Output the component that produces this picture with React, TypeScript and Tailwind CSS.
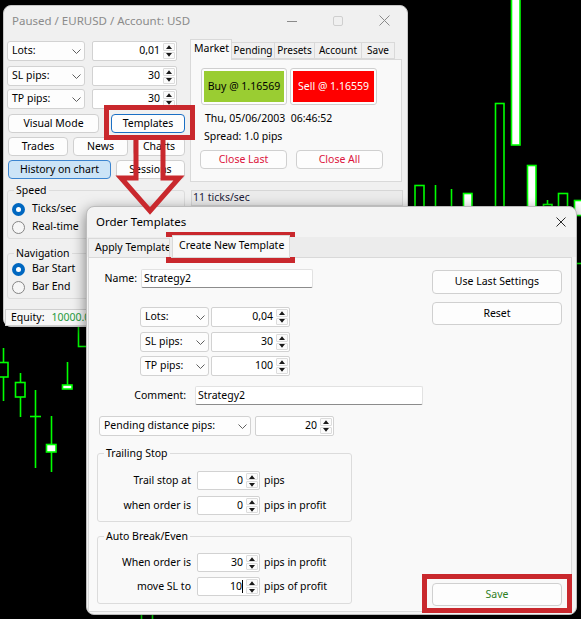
import type { ReactNode } from 'react'

const G = '#00ff00'

function Chevron() {
  return (
    <svg width="9" height="5" viewBox="0 0 9 5" className="shrink-0">
      <path d="M0.5 0.5 L4.5 4.5 L8.5 0.5" fill="none" stroke="#5f5f5f" strokeWidth="1" />
    </svg>
  )
}

function Combo({ label, className }: { label: string; className: string }) {
  return (
    <div className={`h-[20px] flex items-center justify-between pl-[4px] pr-[3px] bg-[#fdfdfd] border border-[#d2d2d2] rounded-[3px] ${className}`}>
      <span className="whitespace-nowrap">{label}</span>
      <Chevron />
    </div>
  )
}

function SpinArrows() {
  return (
    <div className="w-[12px] flex flex-col gap-[1px] py-[1px] mr-[1px]">
      <div className="flex-1 flex items-center justify-center bg-[#fbfbfb] border border-[#dcdcdc] rounded-[1px]">
        <svg width="6" height="4" viewBox="0 0 6 4">
          <path d="M0 4 L3 0.3 L6 4 Z" fill="#1a1a1a" />
        </svg>
      </div>
      <div className="flex-1 flex items-center justify-center bg-[#fbfbfb] border border-[#dcdcdc] rounded-[1px]">
        <svg width="6" height="4" viewBox="0 0 6 4">
          <path d="M0 0 L3 3.7 L6 0 Z" fill="#1a1a1a" />
        </svg>
      </div>
    </div>
  )
}

function Spin({ value, className, caret }: { value: string; className: string; caret?: boolean }) {
  return (
    <div className={`flex bg-white border border-[#d2d2d2] rounded-[2px] ${className}`}>
      <div className="flex-1 flex items-center justify-end pr-[3px]">
        <span>{value}</span>
        {caret && <span className="w-px h-[13px] bg-black" />}
      </div>
      <SpinArrows />
    </div>
  )
}

function Btn({ children, className }: { children: ReactNode; className: string }) {
  return (
    <div className={`flex items-center justify-center whitespace-nowrap border rounded-[4px] ${className}`}>
      {children}
    </div>
  )
}

function Radio({ label, on }: { label: string; on?: boolean }) {
  return (
    <div className="h-[18px] flex items-center gap-[7px] pl-[4px]">
      {on ? (
        <span className="w-[13px] h-[13px] rounded-full bg-[#0067c0] flex items-center justify-center">
          <span className="w-[5px] h-[5px] rounded-full bg-white" />
        </span>
      ) : (
        <span className="w-[13px] h-[13px] rounded-full border border-[#858585] bg-[#f6f6f6]" />
      )}
      <span>{label}</span>
    </div>
  )
}

function Group({ title, className, children }: { title: string; className: string; children: ReactNode }) {
  return (
    <fieldset className={`border border-[#dcdcdc] rounded-[3px] ${className}`}>
      <legend className="ml-[6px] px-[2px] leading-[14px]">{title}</legend>
      {children}
    </fieldset>
  )
}

function SpinRow({ label, value, unit, caret }: { label: string; value: string; unit: string; caret?: boolean }) {
  return (
    <div className="flex items-center">
      <span className="w-[93px] text-right">{label}</span>
      <Spin value={value} caret={caret} className="ml-[6px] w-[63px] h-[19px]" />
      <span className="ml-[4px]">{unit}</span>
    </div>
  )
}

function Chart() {
  return (
    <svg className="absolute inset-0" width="581" height="619" viewBox="0 0 581 619">
      <g stroke={G} strokeWidth="1.6">
        <rect x="415" y="185.5" width="9" height="30" fill="#000" />
        <line x1="435.5" y1="185" x2="435.5" y2="215" />
        <line x1="451.5" y1="189" x2="451.5" y2="215" />
        <rect x="463.5" y="193.5" width="8.5" height="22" fill="#fff" />
        <rect x="495.5" y="103.5" width="8.5" height="112" fill="#000" />
        <rect x="511.5" y="-5" width="8.5" height="150" fill="#fff" />
        <rect x="527.5" y="165.5" width="8.5" height="50" fill="#fff" />
        <line x1="547.5" y1="200" x2="547.5" y2="205" />
        <rect x="543.5" y="204.5" width="8.5" height="10" fill="#000" />
        <rect x="558.5" y="193.5" width="9" height="22" fill="#000" />
        <rect x="574.5" y="200.5" width="10" height="15" fill="#fff" />
        <line x1="577" y1="263.5" x2="581" y2="263.5" />

        <rect x="78.5" y="300" width="12" height="46.5" fill="#000" />
        <line x1="3.5" y1="348" x2="3.5" y2="401" />
        <rect x="-3" y="362.5" width="11" height="14.5" fill="#000" />
        <line x1="20.5" y1="373" x2="20.5" y2="417" />
        <rect x="15.5" y="382.5" width="9.5" height="14.5" fill="#000" />
        <line x1="35.5" y1="390" x2="35.5" y2="468" />
        <line x1="30" y1="416.5" x2="41" y2="416.5" />
        <line x1="67.5" y1="362" x2="67.5" y2="385" />
        <rect x="62.5" y="385" width="9.5" height="4" fill="#fff" />
        <line x1="51.5" y1="416" x2="51.5" y2="472" />
        <rect x="46.5" y="444.5" width="9.5" height="7.5" fill="#fff" />
        <line x1="141.5" y1="612" x2="141.5" y2="619" />
        <line x1="152.5" y1="612" x2="152.5" y2="619" />
      </g>
    </svg>
  )
}

function MainWindow() {
  return (
    <div className="absolute left-[3px] top-[5px] w-[405px] h-[322px] bg-[#f0f0f0] border border-[#c6c6c6] rounded-[8px] shadow-[0_2px_10px_rgba(0,0,0,0.45)] flex flex-col">
      <div className="h-[29px] shrink-0 flex items-center">
        <span className="flex-1 pl-[8px] text-[11.5px] text-[#8b8b8b]">Paused / EURUSD / Account: USD</span>
        <div className="w-[46px] h-[29px] flex items-center justify-center">
          <svg width="10" height="10" viewBox="0 0 10 10">
            <line x1="0" y1="5.5" x2="10" y2="5.5" stroke="#8a8a8a" strokeWidth="1" />
          </svg>
        </div>
        <div className="w-[46px] h-[29px] flex items-center justify-center">
          <svg width="10" height="10" viewBox="0 0 10 10">
            <rect x="0.5" y="0.5" width="9" height="9" rx="1.5" fill="none" stroke="#cfcfcf" strokeWidth="1" />
          </svg>
        </div>
        <div className="w-[46px] h-[29px] flex items-center justify-center">
          <svg width="11" height="11" viewBox="0 0 11 11">
            <path d="M0.5 0.5 L10.5 10.5 M10.5 0.5 L0.5 10.5" stroke="#8a8a8a" strokeWidth="1" />
          </svg>
        </div>
      </div>

      <div className="flex pl-[3px] gap-[5px]">
        {/* left column */}
        <div className="w-[178px] pt-[6px] flex flex-col">
          <div className="flex gap-[7px]">
            <Combo label="Lots:" className="w-[78px]" />
            <Spin value="0,01" className="w-[85px] h-[20px]" />
          </div>
          <div className="flex gap-[7px] mt-[5px]">
            <Combo label="SL pips:" className="w-[78px]" />
            <Spin value="30" className="w-[85px] h-[20px]" />
          </div>
          <div className="flex gap-[7px] mt-[3px]">
            <Combo label="TP pips:" className="w-[78px]" />
            <Spin value="30" className="w-[85px] h-[20px]" />
          </div>
          <div className="flex mt-[5px] ml-[1px]">
            <Btn className="w-[91px] h-[19px] bg-[#fdfdfd] border-[#d0d0d0]">Visual Mode</Btn>
            <Btn className="ml-[12px] w-[74px] h-[19px] bg-[#fdfdfd] border-[#1a6fc4]">Templates</Btn>
          </div>
          <div className="flex mt-[4px] ml-[1px] gap-[5px]">
            <Btn className="w-[60px] h-[19px] bg-[#fdfdfd] border-[#d0d0d0]">Trades</Btn>
            <Btn className="w-[55px] h-[19px] bg-[#fdfdfd] border-[#d0d0d0]">News</Btn>
            <Btn className="w-[52px] h-[19px] bg-[#fdfdfd] border-[#d0d0d0]">Charts</Btn>
          </div>
          <div className="flex mt-[4px] ml-[1px] gap-[5px]">
            <Btn className="w-[103px] h-[19px] bg-[#cce4f7] border-[#3c85d0]">History on chart</Btn>
            <Btn className="w-[69px] h-[19px] bg-[#fdfdfd] border-[#d0d0d0]">Sessions</Btn>
          </div>
          <Group title="Speed" className="mt-[4px] pb-[2px]">
            <div className="mt-[3px]">
              <Radio label="Ticks/sec" on />
              <Radio label="Real-time" />
            </div>
          </Group>
          <Group title="Navigation" className="mt-[7px] pb-[2px]">
            <Radio label="Bar Start" on />
            <Radio label="Bar End" />
          </Group>
          <div className="mt-[10px] -ml-[2px] w-[395px] h-[17px] bg-[#f7f7f7] border border-[#cfcfcf] flex items-center pl-[5px]">
            <span>Equity:</span>
            <span className="ml-[7px] text-[#1f9a3c]">10000.00</span>
          </div>
        </div>

        {/* right column */}
        <div className="w-[212px] pt-[4px] flex flex-col">
          <div className="flex items-end h-[21px] relative z-10 whitespace-nowrap text-[10px]">
            <div className="w-[42px] h-[21px] bg-[#f9f9f9] border border-b-0 border-[#d9d9d9] flex items-center pl-[3px] pb-[3px] text-[10.5px]">Market</div>
            <div className="w-[43px] h-[17px] mb-[1px] bg-[#f0f0f0] border border-l-0 border-[#d9d9d9] flex items-center justify-center">Pending</div>
            <div className="w-[40px] h-[17px] mb-[1px] bg-[#f0f0f0] border border-l-0 border-[#d9d9d9] flex items-center justify-center">Presets</div>
            <div className="w-[47px] h-[17px] mb-[1px] bg-[#f0f0f0] border border-l-0 border-[#d9d9d9] flex items-center justify-center">Account</div>
            <div className="w-[33px] h-[17px] mb-[1px] bg-[#f0f0f0] border border-l-0 border-[#d9d9d9] flex items-center justify-center">Save</div>
          </div>
          <div className="-mt-px h-[123px] bg-[#f9f9f9] border border-[#d9d9d9] flex flex-col">
            <div className="flex mt-[8px] ml-[10px] gap-[3px]">
              <div className="w-[86px] h-[37px] p-[2px] bg-[#fdfdfd] border border-[#cfcfcf] rounded-[3px]">
                <div className="w-full h-full bg-[#9acd32] flex items-center justify-center">Buy @ 1.16569</div>
              </div>
              <div className="w-[87px] h-[37px] p-[2px] bg-[#fdfdfd] border border-[#cfcfcf] rounded-[3px]">
                <div className="w-full h-full bg-[#ff0000] text-white flex items-center justify-center">Sell @ 1.16559</div>
              </div>
            </div>
            <div className="mt-[7px] ml-[14px] h-[14px] flex items-center whitespace-pre">Thu, 05/06/2003  06:46:52</div>
            <div className="mt-[4px] ml-[13px] h-[14px] flex items-center">Spread: 1.0 pips</div>
            <div className="flex mt-[6px] ml-[9px] gap-[9px]">
              <Btn className="w-[87px] h-[19px] bg-[#fdfdfd] border-[#d0d0d0] text-[#dc143c]">Close Last</Btn>
              <Btn className="w-[87px] h-[19px] bg-[#fdfdfd] border-[#d0d0d0] text-[#dc143c]">Close All</Btn>
            </div>
          </div>
          <div className="mt-[8px] ml-[1px] w-[212px] h-[16px] bg-[#ebebeb] border border-[#d6d6d6] flex items-center pl-[1px] text-[#1c1c3a]">11 ticks/sec</div>
        </div>
      </div>
    </div>
  )
}

function TemplatesWindow() {
  return (
    <div className="absolute left-[86px] top-[206px] w-[491px] h-[409px] bg-[#f3f3f3] border border-[#bcbcbc] rounded-[8px] shadow-[0_4px_14px_rgba(0,0,0,0.5)] flex flex-col">
      <div className="h-[30px] shrink-0 flex items-center justify-between pl-[9px] pr-[10px]">
        <span className="text-[11.5px]">Order Templates</span>
        <svg width="10" height="10" viewBox="0 0 10 10">
          <path d="M0.5 0.5 L9.5 9.5 M9.5 0.5 L0.5 9.5" stroke="#2a2a2a" strokeWidth="1" />
        </svg>
      </div>
      <div className="h-[20px] shrink-0 bg-[#ececec] flex items-end relative z-10 pl-[1px] whitespace-nowrap">
        <div className="w-[82px] h-[19px] overflow-hidden bg-[#f0f0f0] border border-b-0 border-[#d9d9d9] flex items-center pl-[6px]">Apply Template</div>
        <div className="ml-[2px] w-[118px] h-[22px] bg-[#f9f9f9] border border-b-0 border-[#d9d9d9] flex items-center pl-[6px] pb-[1px]">Create New Template</div>
      </div>
      <div className="ml-[1px] w-[484px] h-[355px] bg-[#f9f9f9] border border-[#d9d9d9] flex">
        {/* left form */}
        <div className="flex-1 flex flex-col">
          <div className="mt-[11px] flex items-center">
            <span className="w-[48px] text-right">Name:</span>
            <div className="ml-[4px] w-[172px] h-[19px] bg-white border border-[#e2e2e2] border-b-[#8c8c8c] rounded-[2px] flex items-center pl-[2px]">Strategy2</div>
          </div>
          <div className="mt-[19px] ml-[51px] flex gap-[2px]">
            <Combo label="Lots:" className="w-[69px]" />
            <Spin value="0,04" className="w-[79px] h-[20px]" />
          </div>
          <div className="mt-[5px] ml-[51px] flex gap-[2px]">
            <Combo label="SL pips:" className="w-[69px]" />
            <Spin value="30" className="w-[79px] h-[20px]" />
          </div>
          <div className="mt-[4px] ml-[51px] flex gap-[2px]">
            <Combo label="TP pips:" className="w-[69px]" />
            <Spin value="100" className="w-[79px] h-[20px]" />
          </div>
          <div className="mt-[10px] flex items-center">
            <span className="w-[97px] text-right">Comment:</span>
            <div className="ml-[9px] w-[228px] h-[19px] bg-white border border-[#e2e2e2] border-b-[#8c8c8c] rounded-[2px] flex items-center pl-[2px]">Strategy2</div>
          </div>
          <div className="mt-[11px] ml-[10px] flex gap-[4px]">
            <Combo label="Pending distance pips:" className="w-[152px]" />
            <Spin value="20" className="w-[79px] h-[20px]" />
          </div>
          <Group title="Trailing Stop" className="mt-[10px] ml-[8px] w-[255px] pb-[6px]">
            <div className="mt-[11px] flex flex-col gap-[6px]">
              <SpinRow label="Trail stop at" value="0" unit="pips" />
              <SpinRow label="when order is" value="0" unit="pips in profit" />
            </div>
          </Group>
          <Group title="Auto Break/Even" className="mt-[7px] ml-[8px] w-[255px] pb-[7px]">
            <div className="mt-[10px] flex flex-col gap-[5px]">
              <SpinRow label="When order is" value="30" unit="pips in profit" />
              <SpinRow label="move SL to" value="10" unit="pips of profit" caret />
            </div>
          </Group>
        </div>
        {/* right buttons */}
        <div className="w-[130px] mr-[9px] flex flex-col">
          <Btn className="mt-[12px] h-[24px] bg-[#fdfdfd] border-[#d0d0d0]">Use Last Settings</Btn>
          <Btn className="mt-[8px] h-[23px] bg-[#fdfdfd] border-[#d0d0d0]">Reset</Btn>
          <Btn className="mt-auto mb-[5px] h-[23px] bg-[#fdfdfd] border-[#d0d0d0] text-[#2e7d1e]">Save</Btn>
        </div>
      </div>
    </div>
  )
}

function Annotations() {
  return (
    <svg className="absolute inset-0 pointer-events-none" width="581" height="619" viewBox="0 0 581 619">
      <g fill="none" stroke="#c9282d" strokeWidth="5" strokeLinejoin="miter">
        <rect x="106.5" y="107.5" width="86" height="30" />
        <polyline points="136,138 136,178 121,178 150,211 179,178 163,178 163,138" />
        <rect x="168.5" y="234.5" width="124" height="26" />
        <rect x="424.5" y="576.5" width="145" height="34" />
      </g>
    </svg>
  )
}

export default function App() {
  return (
    <div className="relative w-[581px] h-[619px] overflow-hidden bg-black text-[10.5px] text-black font-['Noto_Sans',sans-serif]">
      <Chart />
      <MainWindow />
      <TemplatesWindow />
      <Annotations />
    </div>
  )
}
